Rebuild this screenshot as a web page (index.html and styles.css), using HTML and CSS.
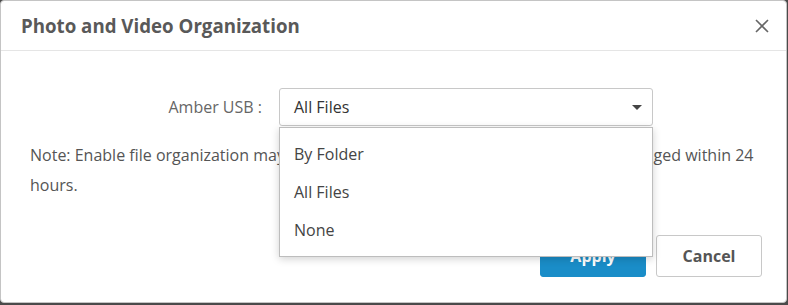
FILE: index.html
```html
<!DOCTYPE html>
<html>
<head>
<meta charset="utf-8">
<link rel="stylesheet" href="styles.css">
</head>
<body>
<div class="dialog">
  <div class="dialog-header">
    <h1 class="dialog-title">Photo and Video Organization</h1>
    <button class="close-btn" aria-label="Close">
      <svg width="14" height="14" viewBox="0 0 14 14"><path d="M1 1 L13 13 M13 1 L1 13" stroke="#666" stroke-width="1.6" fill="none"/></svg>
    </button>
  </div>
  <div class="dialog-body">
    <div class="form-row">
      <label class="form-label">Amber USB :</label>
      <div class="select-wrap">
        <div class="select">
          <span class="select-value">All Files</span>
          <span class="caret"></span>
        </div>
        <ul class="dropdown">
          <li class="dropdown-item">By Folder</li>
          <li class="dropdown-item">All Files</li>
          <li class="dropdown-item">None</li>
        </ul>
      </div>
    </div>
    <p class="note">Note: Enable file organization may take some time. Pictures and videos will be arranged within 24 hours.</p>
  </div>
  <div class="dialog-footer">
    <button class="btn btn-primary">Apply</button>
    <button class="btn btn-default">Cancel</button>
  </div>
</div>
</body>
</html>
```
FILE: styles.css
```css
html, body {
  margin: 0;
  padding: 0;
}
body {
  background: #4a4a4a;
  width: 788px;
  height: 305px;
  overflow: hidden;
  font-family: "Open Sans", "Noto Sans", sans-serif;
}
.dialog {
  box-sizing: border-box;
  width: 787px;
  height: 303px;
  background: #fff;
  border: 1px solid #c4c4c4;
  border-radius: 4px;
  display: flex;
  flex-direction: column;
}
.dialog-header {
  height: 49px;
  border-bottom: 1px solid #e5e5e5;
  display: flex;
  align-items: center;
  justify-content: space-between;
  padding: 0 17px 0 20px;
}
.dialog-title {
  margin: 0;
  font-size: 18.7px;
  font-weight: 700;
  color: #595959;
}
.close-btn {
  background: none;
  border: none;
  padding: 0;
  width: 14px;
  height: 14px;
  display: flex;
  margin-top: 1px;
}
.dialog-body {
  padding: 37px 30px 0 29px;
}
.form-row {
  display: flex;
  align-items: center;
  gap: 17px;
}
.form-label {
  width: 232px;
  text-align: right;
  font-size: 16px;
  color: #666;
}
.select-wrap {
  position: relative;
  width: 374px;
}
.select {
  box-sizing: border-box;
  height: 38px;
  border: 1px solid #c8c8c8;
  border-radius: 3px;
  display: flex;
  align-items: center;
  justify-content: space-between;
  padding: 0 10px 0 14px;
}
.select-value {
  font-size: 16px;
  color: #333;
}
.caret {
  width: 0;
  height: 0;
  border-left: 5px solid transparent;
  border-right: 5px solid transparent;
  border-top: 5px solid #444;
}
.dropdown {
  position: absolute;
  left: 0;
  top: 39px;
  box-sizing: border-box;
  width: 374px;
  margin: 0;
  padding: 7px 0;
  list-style: none;
  background: #fff;
  border: 1px solid #bdbdbd;
  box-shadow: 0 2px 8px rgba(0,0,0,0.18);
  z-index: 2;
}
.dropdown-item {
  height: 38px;
  line-height: 38px;
  padding-left: 14px;
  font-size: 16px;
  color: #444;
}
.note {
  margin: 14px 0 0;
  font-size: 16px;
  line-height: 30px;
  color: #555;
}
.dialog-footer {
  margin-top: auto;
  display: flex;
  justify-content: flex-end;
  gap: 10px;
  padding: 0 24px 25px 0;
}
.btn {
  box-sizing: border-box;
  width: 106px;
  height: 42px;
  border-radius: 3px;
  font-family: inherit;
  font-size: 16px;
  font-weight: 700;
}
.btn-primary {
  background: #1a8dc8;
  border: 1px solid #1a8dc8;
  color: #fff;
}
.btn-default {
  background: #fff;
  border: 1px solid #c8c8c8;
  color: #555;
}
```
